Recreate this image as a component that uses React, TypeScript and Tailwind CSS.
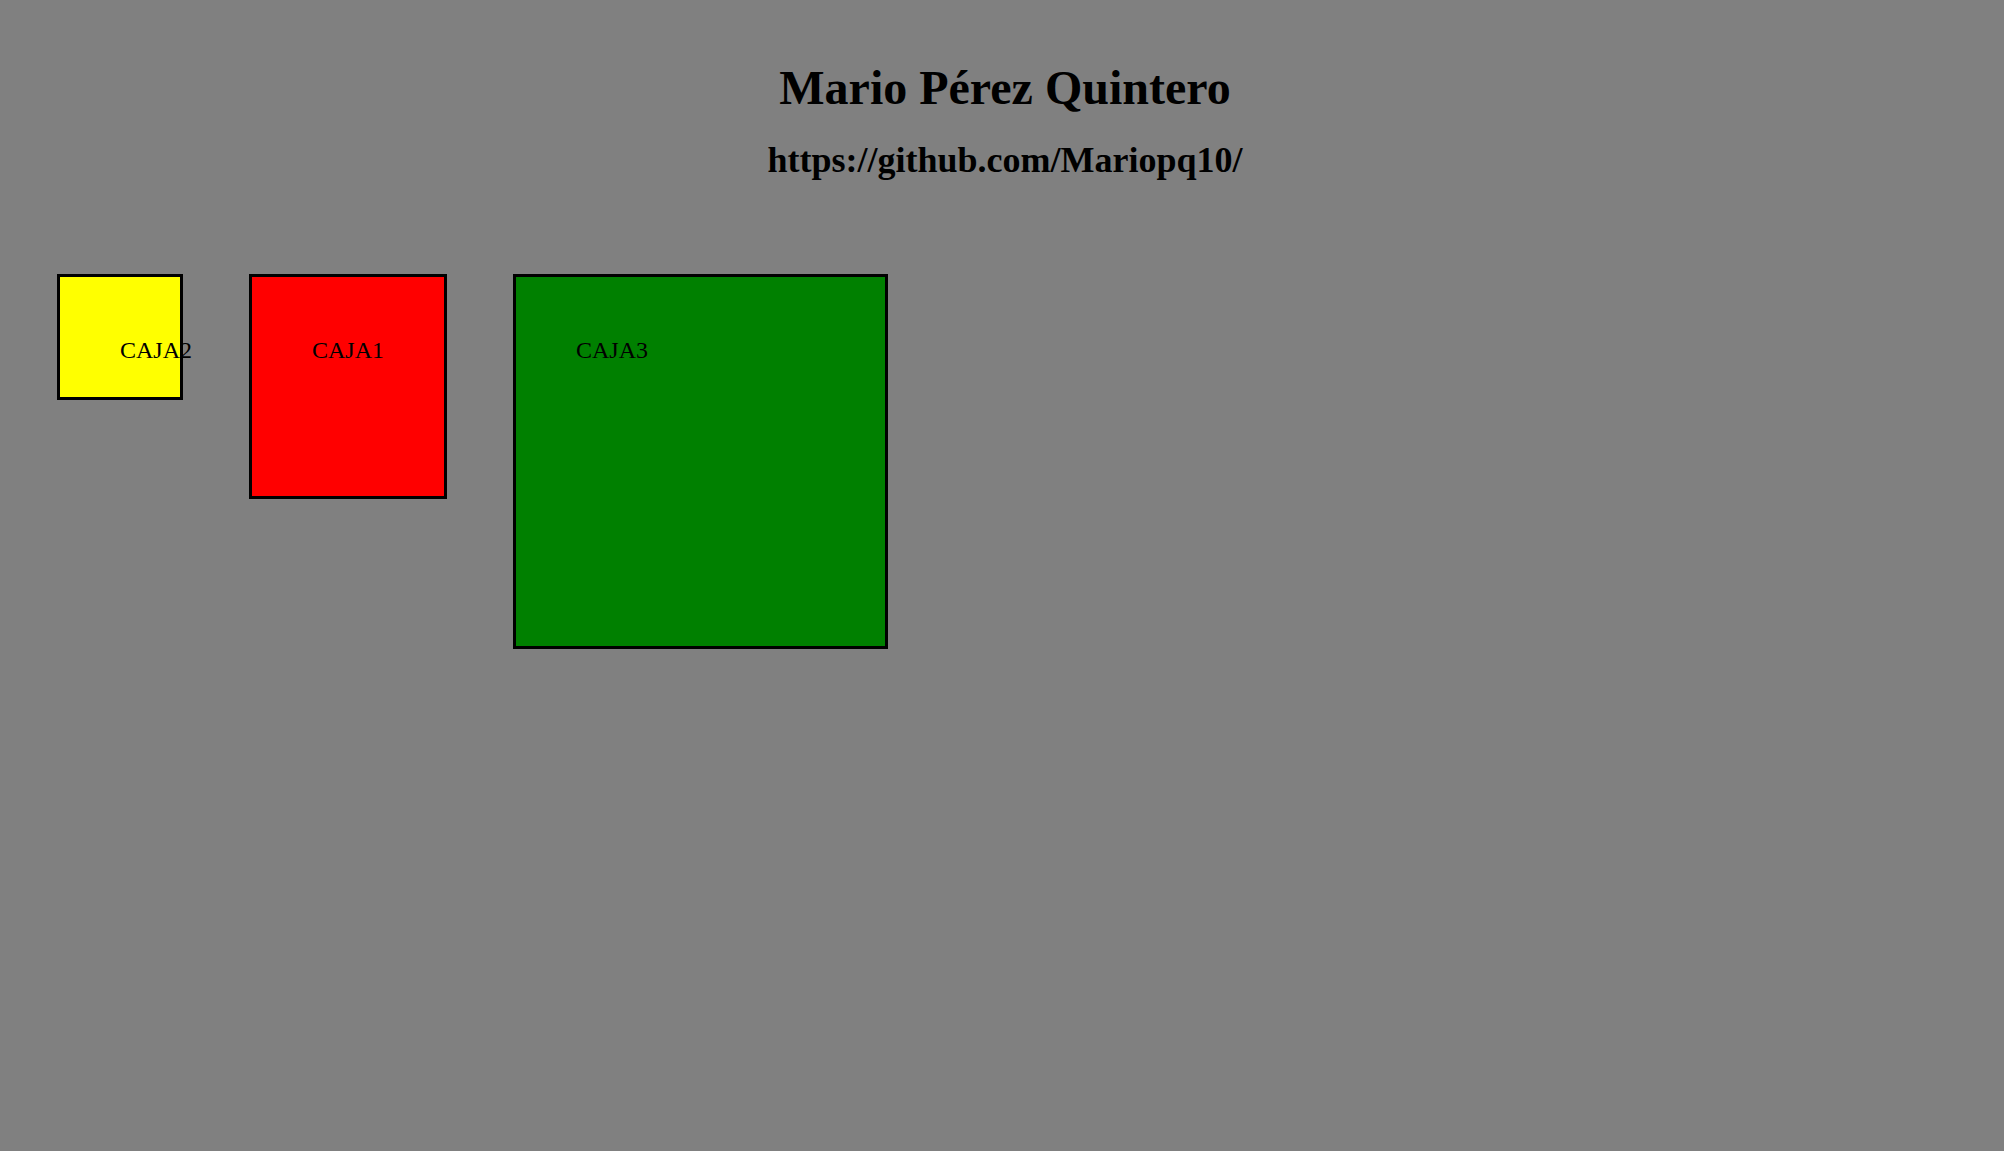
import React from 'react';

const App = () => {
  const boxes = [
    { label: "CAJA2", className: "w-[126px] h-[126px] bg-[#ffff00]" },
    { label: "CAJA1", className: "w-[198px] h-[225px] bg-[#ff0000]" },
    { label: "CAJA3", className: "w-[375px] h-[375px] bg-[#008000]" }
  ];

  return (
    <div className="min-h-screen bg-[#808080] text-black font-['Liberation_Serif',serif]">
      <header className="pt-[60px] pl-[6px] text-center">
        <h1 className="text-[48px] font-bold leading-[55px]">Mario Pérez Quintero</h1>
        <h2 className="mt-[25px] text-[36px] font-bold leading-[41px]">https://github.com/Mariopq10/</h2>
      </header>

      {/* Cajas */}
      <div className="flex items-start gap-[66px] pl-[57px] mt-[93px]">
        {boxes.map((box) => (
          <div
            key={box.label}
            className={`shrink-0 border-[3px] border-black p-[60px] text-[24px] leading-[27px] ${box.className}`}
          >
            {box.label}
          </div>
        ))}
      </div>
    </div>
  );
};

export default App;
